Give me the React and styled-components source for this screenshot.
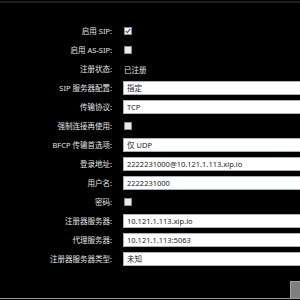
import React from 'react';
import styled, { createGlobalStyle } from 'styled-components';

const Global = createGlobalStyle`
  html, body {
    margin: 0;
    padding: 0;
    background: #000;
    overflow: hidden;
  }
  body {
    font-family: 'Noto Sans', 'Noto Sans CJK SC', sans-serif;
  }
`;

const Frame = styled.div`
  width: 300px;
  height: 300px;
  box-sizing: border-box;
  display: flex;
  flex-direction: column;
  background: #000;
  overflow: hidden;
`;

const TopRule = styled.div`
  height: 2px;
  margin-top: 1px;
  background: #1e1e1e;
  flex: none;
`;

const Form = styled.div`
  display: grid;
  grid-template-columns: 112px 1fr;
  column-gap: 11px;
  row-gap: 5px;
  grid-auto-rows: 14px;
  padding-top: 21px;
  flex: none;
`;

const Label = styled.div`
  font-size: 7.5px;
  line-height: 14px;
  color: #e4e4e4;
  text-align: right;
  white-space: nowrap;
`;

const Cell = styled.div`
  display: flex;
  align-items: center;
  min-width: 0;
`;

const Value = styled.span`
  font-size: 7.5px;
  color: #e4e4e4;
  padding-left: 1px;
`;

const Input = styled.div`
  box-sizing: border-box;
  width: 200px;
  height: 14px;
  flex: none;
  background: #fff;
  border: 1px solid #a7b0bd;
  font-size: 7.5px;
  line-height: 12px;
  color: #222;
  padding-left: 3px;
  white-space: nowrap;
`;

const Box = styled.div`
  box-sizing: border-box;
  width: 8px;
  height: 8px;
  margin-left: 1px;
  background: ${p => (p.checked ? '#f2f4fa' : '#ececec')};
  border: 1px solid #8c8c8c;
  display: flex;
  align-items: center;
  justify-content: center;
`;

const Spacer = styled.div`
  flex: 1;
`;

const Foot = styled.div`
  display: flex;
  justify-content: flex-end;
  flex: none;
`;

const Grip = styled.div`
  width: 10px;
  height: 17px;
  box-sizing: border-box;
  background: #7f7f7f;
  border: 1px solid #a0a0a0;
  border-right: none;
  border-bottom: none;
`;

const BottomRule = styled.div`
  height: 1px;
  margin-bottom: 1px;
  background: #9a9a9a;
  flex: none;
`;

const Check = ({ checked }) => (
  <Box checked={checked}>
    {checked && (
      <svg width="6" height="6" viewBox="0 0 6 6">
        <path d="M0.8 3.2 L2.3 4.7 L5.2 0.9" fill="none" stroke="#3b5aa8" strokeWidth="1.2" />
      </svg>
    )}
  </Box>
);

const rows = [
  { label: '启用 SIP:', check: true },
  { label: '启用 AS-SIP:', check: false },
  { label: '注册状态:', text: '已注册' },
  { label: 'SIP 服务器配置:', input: '指定' },
  { label: '传输协议:', input: 'TCP' },
  { label: '强制连接再使用:', check: false },
  { label: 'BFCP 传输首选项:', input: '仅 UDP' },
  { label: '登录地址:', input: '2222231000@10.121.1.113.xip.io' },
  { label: '用户名:', input: '2222231000' },
  { label: '密码:', check: false },
  { label: '注册器服务器:', input: '10.121.1.113.xip.io' },
  { label: '代理服务器:', input: '10.121.1.113:5063' },
  { label: '注册器服务器类型:', input: '未知' },
];

export default function App() {
  return (
    <Frame>
      <Global />
      <TopRule />
      <Form>
        {rows.map(r => (
          <React.Fragment key={r.label}>
            <Label>{r.label}</Label>
            <Cell>
              {r.check !== undefined && <Check checked={r.check} />}
              {r.text && <Value>{r.text}</Value>}
              {r.input && <Input>{r.input}</Input>}
            </Cell>
          </React.Fragment>
        ))}
      </Form>
      <Spacer />
      <Foot>
        <Grip />
      </Foot>
      <BottomRule />
    </Frame>
  );
}
